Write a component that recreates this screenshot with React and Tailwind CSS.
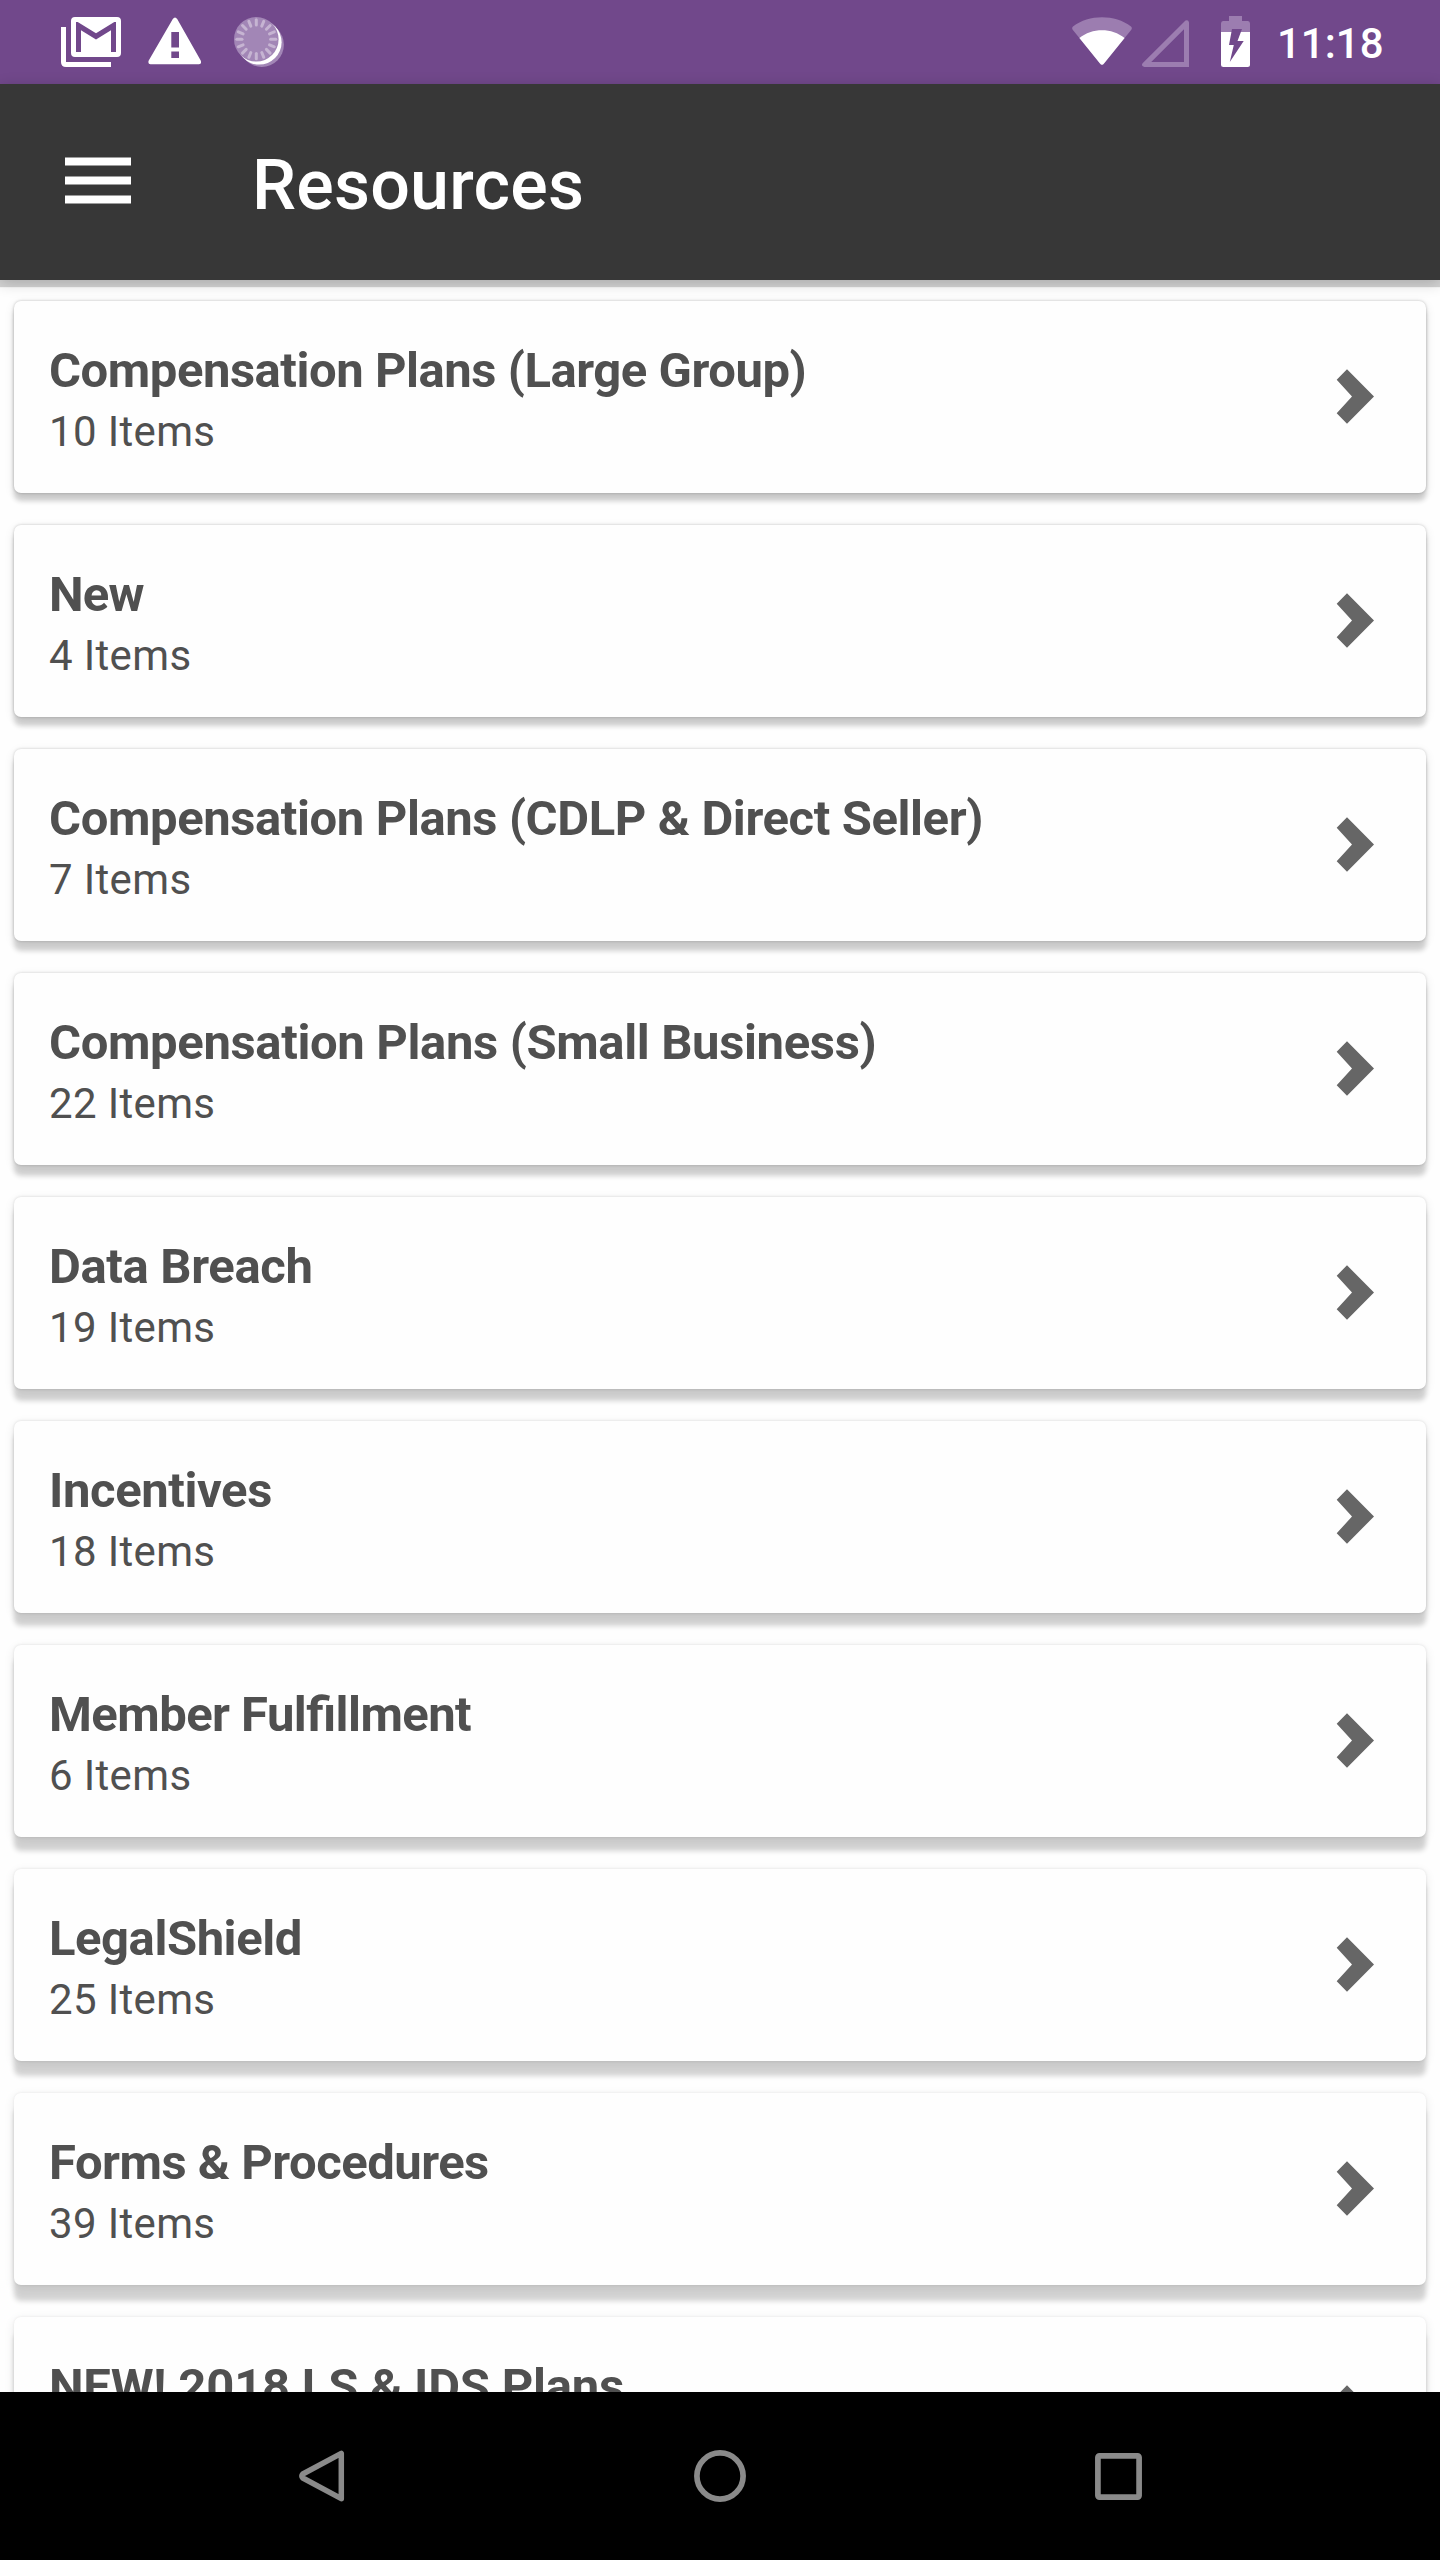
const resources = [
  { title: 'Compensation Plans (Large Group)', count: 10, tracking: -0.46 },
  { title: 'New', count: 4, tracking: -0.8 },
  { title: 'Compensation Plans (CDLP & Direct Seller)', count: 7, tracking: -0.4 },
  { title: 'Compensation Plans (Small Business)', count: 22, tracking: -0.36 },
  { title: 'Data Breach', count: 19, tracking: -0.36 },
  { title: 'Incentives', count: 18, tracking: -0.4 },
  { title: 'Member Fulfillment', count: 6, tracking: -0.55 },
  { title: 'LegalShield', count: 25, tracking: -0.45 },
  { title: 'Forms & Procedures', count: 39, tracking: -0.5 },
  { title: 'NEW! 2018 LS & IDS Plans', count: 12, tracking: -0.22 },
];

function MailIcon() {
  return (
    <svg width="60" height="50" viewBox="0 0 60 50" fill="none">
      <path d="M0 10H5V45H50V50H5Q0 50 0 45Z" fill="#fff" />
      <path
        fillRule="evenodd"
        fill="#fff"
        d="M14 0H56Q60 0 60 4V36Q60 40 56 40H14Q10 40 10 36V4Q10 0 14 0ZM15 5V35H20V13.3L35 22.6L50 13.3V35H55V5H53.3L35 16.3L16.7 5Z"
      />
    </svg>
  );
}

function WarningIcon() {
  return (
    <svg width="54" height="48" viewBox="0 0 54 48">
      <path
        fillRule="evenodd"
        fill="#fff"
        d="M24.8 2Q27 -1 29.2 2L52.7 43.5Q54 47 51 47.3H2.5Q-0.3 47 0.6 43.8ZM23.3 15V30.5H31V15ZM23.3 34.5V41H31V34.5Z"
      />
    </svg>
  );
}

function SyncDiscIcon() {
  const ticks = Array.from({ length: 16 }, (_, i) => i * 22.5);
  return (
    <svg width="50" height="50" viewBox="0 0 50 50">
      <circle cx="27.7" cy="27.8" r="22.2" fill="#a286b6" />
      <circle cx="25.2" cy="25.2" r="22.4" fill="#fff" />
      <circle cx="22.3" cy="22.3" r="22.3" fill="#a286b6" />
      {ticks.map((angle) => (
        <path
          key={angle}
          d="M22.3 2.8V8"
          stroke="#c6b4d2"
          strokeWidth="3"
          strokeLinecap="round"
          transform={`rotate(${angle} 22.3 22.3)`}
        />
      ))}
    </svg>
  );
}

function WifiIcon() {
  return (
    <svg width="60" height="49" viewBox="0 0 60 49">
      <path
        fill="#9c7db0"
        d="M1 9.5C17 -2.8 43 -2.8 59 9.5Q60.5 11 59.3 12.8L32 46.5Q30 49 28 46.5L0.7 12.8Q-0.5 11 1 9.5Z"
      />
      <path fill="#fff" d="M7.4 21C20 10.5 40 10.5 52.6 21L32 46.5Q30 49 28 46.5Z" />
    </svg>
  );
}

function SignalIcon() {
  return (
    <svg width="47" height="47" viewBox="0 0 47 47">
      <path
        fillRule="evenodd"
        fill="#9c7db0"
        d="M43.5 0.5Q46.5 -0.8 47 2.5V47H2.5Q-1.3 46 0.6 43.2ZM42 9.2L9.2 42H42Z"
      />
    </svg>
  );
}

function BatteryIcon() {
  return (
    <svg width="29" height="51" viewBox="0 0 29 51">
      <path fill="#9c7db0" d="M8 0H21V5H27Q29 5 29 7.5V16H0V7.5Q0 5 2 5H8Z" />
      <path fill="#fff" d="M0 16H29V48.5Q29 51 26.5 51H2.5Q0 51 0 48.5Z" />
      <path fill="#71488b" d="M11 13H21L16.5 25H22.7L8.8 46L12.8 29H8Z" />
    </svg>
  );
}

function StatusBar() {
  return (
    <div className="flex h-[84px] shrink-0 items-start bg-[#71488b] pl-[61px] pt-4">
      <div className="flex items-start">
        <div className="mt-px"><MailIcon /></div>
        <div className="ml-[27px] mt-px"><WarningIcon /></div>
        <div className="ml-8 mt-px"><SyncDiscIcon /></div>
      </div>
      <div className="ml-auto flex items-start">
        <div className="mt-px"><WifiIcon /></div>
        <div className="ml-[10px] mt-1"><SignalIcon /></div>
        <div className="ml-8"><BatteryIcon /></div>
        <span className="ml-[27px] mt-1 w-[163px] whitespace-nowrap text-[42px] font-medium leading-[48px] text-white">11:18</span>
      </div>
    </div>
  );
}

function AppBar() {
  return (
    <header className="relative z-10 flex h-[196px] shrink-0 items-center bg-[#373737] pl-[65px] shadow-[0_7px_1px_rgba(0,0,0,0.17),0_3px_14px_rgba(0,0,0,0.2)]">
      <svg className="-mt-[3px]" width="66" height="47" viewBox="0 0 66 47" fill="#fff">
        <rect y="0.5" width="66" height="8" />
        <rect y="19.5" width="66" height="8" />
        <rect y="38.5" width="66" height="8" />
      </svg>
      <h1 className="ml-[121px] mt-[6px] text-[70px] font-medium leading-[82px] tracking-[0.2px] text-white">Resources</h1>
    </header>
  );
}

function ResourceCard({ title, count, index, tracking }) {
  const drop = 7.5 + index;
  const topAlpha = Math.max(0.07, 0.23 - index * 0.02);
  const boxShadow = `0 ${drop}px 5px rgba(0,0,0,0.17), 0 0 3px rgba(0,0,0,${topAlpha}), 0 3px 11px rgba(0,0,0,0.09)`;
  return (
    <li
      className="flex h-48 shrink-0 items-center justify-between rounded-[7px] bg-[#fefefe] pl-[35px] pr-[52px]"
      style={{ boxShadow }}
    >
      <div className="pt-[7px] text-[#505050]">
        <h2
          className="whitespace-nowrap text-[49px] font-bold leading-[57px] [font-feature-settings:'liga'_1]"
          style={{ letterSpacing: `${tracking}px` }}
        >
          {title}
        </h2>
        <p className="mt-1 text-[42px] leading-[57px] tracking-[0.35px]">{count} Items</p>
      </div>
      <svg className="-mt-[2px]" width="38" height="55" viewBox="0 0 38 55">
        <path d="M11 0.3L38 27.5L11 54.7L0.7 44.3L16 27.5L0.7 10.7Z" fill="#666" />
      </svg>
    </li>
  );
}

function NavigationBar() {
  return (
    <nav className="relative z-10 flex h-[168px] shrink-0 items-center justify-between bg-black pl-[298px] pr-[298px]">
      <svg width="47" height="52" viewBox="0 0 47 52" fill="none" stroke="#8a8a8a" strokeWidth="5.5" strokeLinejoin="round">
        <path d="M43.3 3.3V48.7L4.8 28Q2.8 26 4.8 24Z" />
      </svg>
      <svg width="52" height="52" viewBox="0 0 52 52" fill="none" stroke="#8a8a8a" strokeWidth="5.7">
        <circle cx="26" cy="26" r="23.1" />
      </svg>
      <svg width="47" height="47" viewBox="0 0 47 47" fill="none" stroke="#8a8a8a" strokeWidth="5.7">
        <rect x="2.9" y="2.9" width="41.2" height="41.2" rx="1.5" />
      </svg>
    </nav>
  );
}

export default function App() {
  return (
    <div className="flex h-[2560px] w-[1440px] flex-col overflow-hidden bg-[#fefefe] font-['Roboto',sans-serif]">
      <StatusBar />
      <AppBar />
      <ul className="flex min-h-0 flex-1 flex-col gap-8 overflow-hidden px-[14px] pt-[21px]">
        {resources.map((item, index) => (
          <ResourceCard key={item.title} {...item} index={index} />
        ))}
      </ul>
      <NavigationBar />
    </div>
  );
}
